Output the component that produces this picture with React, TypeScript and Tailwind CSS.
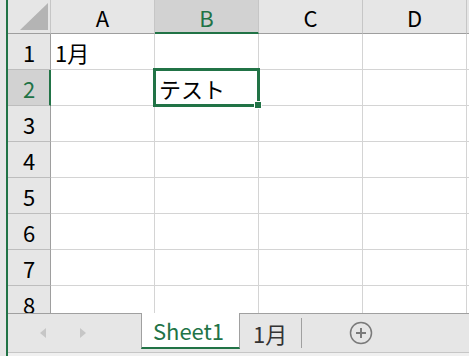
import React from 'react';

const columns = ['A', 'B', 'C', 'D', 'E'];
const rows = [1, 2, 3, 4, 5, 6, 7, 8];

const cellText: Record<string, string> = {
  'A1': '1月',
  'B2': 'テスト',
};

export default function App() {
  return (
    <div
      className="flex h-[356px] w-[469px] overflow-hidden bg-[#e6e6e6] text-[22px] leading-none text-black"
      style={{ fontFamily: '"Noto Sans CJK JP", "Noto Sans", sans-serif' }}
    >
      <div className="w-[6px] shrink-0" />
      <div className="w-[2px] shrink-0 bg-[#217346]" />

      <div className="flex min-w-0 flex-1 flex-col">
        {/* Sheet grid */}
        <div className="relative h-[313px] shrink-0 overflow-hidden bg-white">
          <div className="flex h-[34px]">
            <div className="relative w-[43px] shrink-0 border-r border-b border-r-[#c6c6c6] border-b-[#9e9e9e] bg-[#e6e6e6]">
              <svg className="absolute left-[12px] top-[3px]" width="28" height="27" viewBox="0 0 28 27">
                <polygon points="28,0 28,27 0,27" fill="#b4b4b4" />
              </svg>
            </div>
            {columns.map((c) => (
              <div
                key={c}
                className={
                  c === 'B'
                    ? 'flex w-[104px] shrink-0 items-center justify-center border-r border-b-2 border-r-[#c6c6c6] border-b-[#217346] bg-[#d2d2d2] pt-[2px] text-[#217346]'
                    : 'flex w-[104px] shrink-0 items-center justify-center border-r border-b border-r-[#c6c6c6] border-b-[#9e9e9e] bg-[#e6e6e6]'
                }
              >
                {c === 'E' ? '' : c}
              </div>
            ))}
          </div>

          {rows.map((r) => (
            <div key={r} className="flex h-[36px]">
              <div
                className={
                  r === 2
                    ? 'flex w-[43px] shrink-0 items-center justify-center border-r-2 border-b border-r-[#217346] border-b-[#bdbdbd] bg-[#d2d2d2] pl-[1px] text-[#217346]'
                    : 'flex w-[43px] shrink-0 items-center justify-center border-r border-b border-r-[#9e9e9e] border-b-[#bdbdbd] bg-[#e6e6e6]'
                }
              >
                {r}
              </div>
              {columns.map((c) => (
                <div
                  key={c}
                  className="flex w-[104px] shrink-0 items-center border-r border-b border-[#d4d4d4] pl-[4px]"
                >
                  {cellText[c + r]}
                </div>
              ))}
            </div>
          ))}

          {/* active cell */}
          <div className="absolute left-[145px] top-[68px] h-[39px] w-[107px] border-[3px] border-[#217346]" />
          <div className="absolute left-[246px] top-[101px] h-[8px] w-[8px] border border-white bg-[#217346]" />
        </div>

        {/* Sheet tabs */}
        <div className="flex h-[39px] shrink-0 items-start">
          <div className="flex h-full w-[133px] shrink-0 items-center gap-[34px] border-t border-[#a0a0a0] pl-[32px]">
            <svg width="6" height="10" viewBox="0 0 6 10">
              <polygon points="6,0 6,10 0,5" fill="#c6c6c6" />
            </svg>
            <svg width="6" height="10" viewBox="0 0 6 10">
              <polygon points="0,0 0,10 6,5" fill="#c6c6c6" />
            </svg>
          </div>
          <div className="flex h-[36px] w-[99px] shrink-0 items-center justify-center border-x border-b-2 border-x-[#a0a0a0] border-b-[#217346] bg-white pr-[4px] text-[#217346]">
            Sheet1
          </div>
          <div className="flex h-full flex-1 items-center border-t border-[#a0a0a0]">
            <span className="ml-[13px] text-[#333333]">1月</span>
            <div className="ml-[14px] h-[30px] w-[1px] bg-[#a0a0a0]" />
            <svg className="ml-[47px]" width="24" height="24" viewBox="0 0 24 24">
              <circle cx="12" cy="12" r="10.5" fill="none" stroke="#7a7a7a" strokeWidth="1.5" />
              <path d="M12 7v10M7 12h10" stroke="#7a7a7a" strokeWidth="2" />
            </svg>
          </div>
        </div>
        <div className="h-[1px] shrink-0 bg-[#c6c6c6]" />
        <div className="flex-1 bg-[#f0f0f0]" />
      </div>
    </div>
  );
}
